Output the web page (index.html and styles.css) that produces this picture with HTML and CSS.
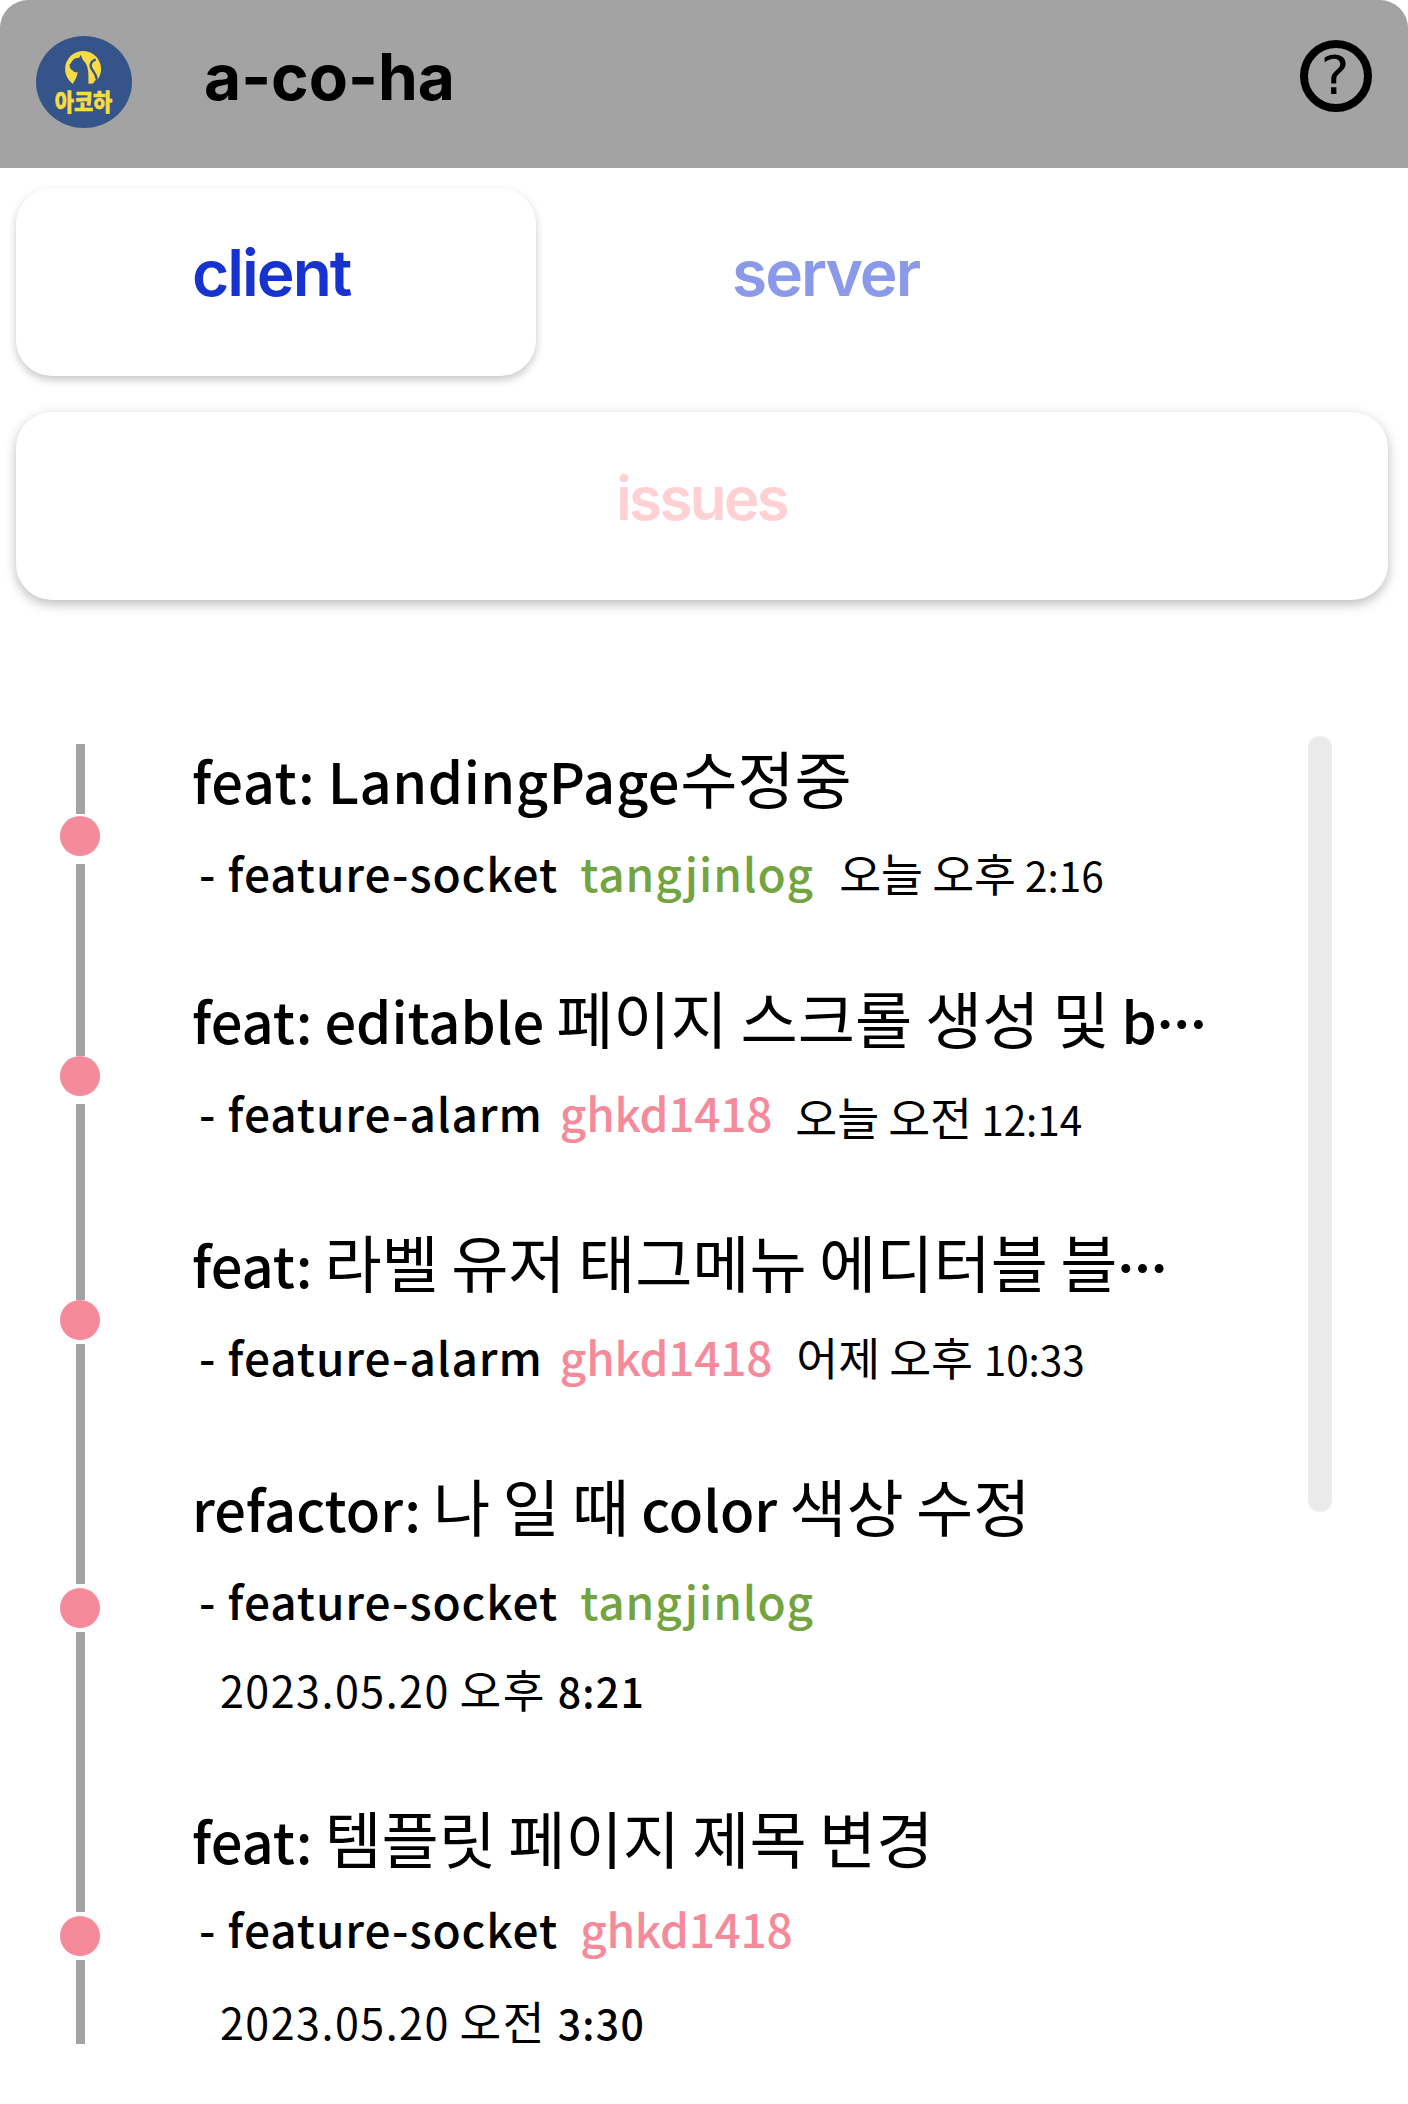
FILE: index.html
```html
<!DOCTYPE html>
<html lang="ko">
<head>
<meta charset="utf-8">
<title>a-co-ha</title>
<link rel="stylesheet" href="styles.css">
</head>
<body>
<header class="header">
  <svg class="logo" viewBox="0 0 96 92" width="96" height="92">
    <ellipse cx="48" cy="46" rx="48" ry="46" fill="#34548a"/>
    <path d="M36.6 47.7A18 18 0 1 1 61.8 43.4L60.4 43L57 47.4L52 47.7Z" fill="#f8dc45"/>
    <path d="M36.6 48.4C39 43.5 41.6 41 41.4 36C39.6 36.4 37.6 36.6 36.9 34.6C34.6 34 33.3 31.5 33.6 28.6C35.4 27 36.4 23.4 39.4 22.2L43.2 21.8L44.7 18.8L47 24C50.4 27 51.8 31 52.2 36C52.6 40 52.4 44 52.4 48.4Z" fill="#34548a"/>
    <path d="M58.8 23.8C55.4 25 53.8 28.4 55 31.6C56.4 34.8 60 37.4 60.6 42.6" fill="none" stroke="#34548a" stroke-width="2.4" stroke-linecap="round"/>
    <text class="logo-text" transform="translate(47.5 75.2) scale(1 1.14)" text-anchor="middle">아코하</text>
  </svg>
  <h1 class="header-title">a-co-ha</h1>
  <button class="help">?</button>
</header>

<nav class="tabs">
  <a class="tab tab-active">client</a>
  <a class="tab">server</a>
</nav>
<a class="issues">issues</a>

<main class="commits">
  <ol class="timeline">
    <li class="commit commit-1">
      <div class="rail"><i class="line-top"></i><i class="dot"></i><i class="line-bottom"></i></div>
      <div class="body">
        <h2 class="title wide">feat: LandingPage<span class="ko">수정중</span></h2>
        <p class="meta"><span class="branch">- feature-socket</span><span class="author green">tangjinlog</span><span class="when"><span class="ko">오늘</span> <span class="ko">오후</span> 2:16</span></p>
      </div>
    </li>
    <li class="commit commit-2">
      <div class="rail"><i class="line-top"></i><i class="dot"></i><i class="line-bottom"></i></div>
      <div class="body">
        <h2 class="title">feat: editable <span class="ko">페이지 스크롤 생성 및</span> b<span class="more">…</span></h2>
        <p class="meta"><span class="branch">- feature-alarm</span><span class="author pink">ghkd1418</span><span class="when lowered"><span class="ko">오늘</span> <span class="ko">오전</span> 12:14</span></p>
      </div>
    </li>
    <li class="commit commit-3">
      <div class="rail"><i class="line-top"></i><i class="dot"></i><i class="line-bottom"></i></div>
      <div class="body">
        <h2 class="title">feat: <span class="ko">라벨 유저 태그메뉴 에디터블 블</span><span class="more">…</span></h2>
        <p class="meta"><span class="branch">- feature-alarm</span><span class="author pink">ghkd1418</span><span class="when"><span class="ko">어제</span> <span class="ko">오후</span> <span class="clock">10:33</span></span></p>
      </div>
    </li>
    <li class="commit commit-4">
      <div class="rail"><i class="line-top"></i><i class="dot"></i><i class="line-bottom"></i></div>
      <div class="body">
        <h2 class="title">refactor: <span class="ko">나 일 때</span> color <span class="ko">색상 수정</span></h2>
        <p class="meta"><span class="branch">- feature-socket</span><span class="author green">tangjinlog</span></p>
        <p class="date"><span class="day">2023.05.20 </span><span class="ko">오후</span><span class="time"> 8:21</span></p>
      </div>
    </li>
    <li class="commit commit-5">
      <div class="rail"><i class="line-top"></i><i class="dot"></i><i class="line-bottom"></i></div>
      <div class="body">
        <h2 class="title">feat: <span class="ko">템플릿 페이지 제목 변경</span></h2>
        <p class="meta"><span class="branch">- feature-socket</span><span class="author pink">ghkd1418</span></p>
        <p class="date"><span class="day">2023.05.20 </span><span class="ko">오전</span><span class="time"> 3:30</span></p>
      </div>
    </li>
  </ol>
  <div class="scrollbar"></div>
</main>
</body>
</html>
```
FILE: styles.css
```css
* { box-sizing: border-box; margin: 0; padding: 0; }

body {
  width: 1408px;
  height: 2104px;
  overflow: hidden;
  background: #fff;
  color: #000;
  font-family: "Noto Sans CJK JP", "Noto Sans CJK KR", sans-serif;
  font-feature-settings: "locl" 0;
}

/* header */
.header {
  display: flex;
  align-items: flex-start;
  height: 168px;
  padding: 36px 36px 0;
  background: #a3a3a3;
  border-radius: 28px 28px 0 0;
}
.logo { flex: none; }
.logo-text {
  font: 900 20.9px "Noto Sans CJK KR", sans-serif;
  fill: #f8dc45;
  stroke: #f8dc45;
  stroke-width: .4px;
}
.header-title {
  flex: 1;
  margin-left: 72px;
  font: 700 64px/82px Inter, sans-serif;
}
.help {
  width: 72px;
  height: 72px;
  margin-top: 4px;
  padding-right: 2px;
  border: 8px solid #000;
  border-radius: 50%;
  background: none;
  color: #000;
  font: 400 54px/52px "DejaVu Sans", sans-serif;
}

/* tabs */
.tabs { display: flex; padding: 20px 16px 0; }
.tab, .issues {
  height: 188px;
  border-radius: 36px;
  font: 600 64px/170px Inter, sans-serif;
  letter-spacing: -2px;
}
.tab { flex: 0 0 520px; padding-left: 196px; color: #8a99e8; }
.tab-active {
  padding-left: 176px;
  color: #1733cf;
  background: #fff;
  box-shadow: 0 4px 8px rgba(0, 0, 0, .22);
}
.issues {
  display: block;
  margin: 36px 20px 0 16px;
  padding-left: 600px;
  color: #ffd1d3;
  font-size: 60px;
  line-height: 172px;
  letter-spacing: -2.6px;
  box-shadow: 0 4px 12px rgba(0, 0, 0, .27);
}

/* commit list */
.commits {
  display: flex;
  justify-content: space-between;
  padding: 136px 76px 0 60px;
}
.timeline { list-style: none; margin-top: 8px; }
.commit { display: flex; height: 240px; }
.commit-2, .commit-3 { height: 244px; }
.commit-4 { height: 332px; }

.rail {
  display: flex;
  flex-direction: column;
  align-items: center;
  width: 40px;
  margin-right: 92px;
}
.line-top, .line-bottom { width: 9px; background: #a3a3a3; }
.line-top { height: 72px; }
.line-bottom { flex: 1; margin-top: 8px; }
.dot { width: 40px; height: 40px; border-radius: 50%; background: #f58a9b; }
.commit-1 .line-top { height: 70px; margin-bottom: 2px; }
.commit-3 .line-bottom, .commit-4 .line-bottom, .commit-5 .line-bottom { margin-top: 4px; }
.commit-4 .line-top { height: 112px; margin-bottom: 4px; }
.commit-5 .line-top { height: 108px; margin-bottom: 4px; }

.body { white-space: nowrap; }
.title { font-size: 56px; line-height: 72px; font-weight: 500; word-spacing: -.6px; }
.wide { letter-spacing: .56px; }
.title .ko {
  font-size: 62.2px;
  font-weight: 400;
  line-height: 0;
  letter-spacing: 0;
  word-spacing: -1.6px;
}
.commit-2 .title .ko { word-spacing: -1.1px; }
.title .more {
  font-size: 50px;
  font-weight: 900;
  line-height: 0;
  vertical-align: 1px;
}

.meta {
  height: 56px;
  margin-top: 28px;
  padding-left: 7px;
  font-size: 46px;
  line-height: 56px;
  font-weight: 500;
}
.meta span, .date span { line-height: 0; }
.branch { letter-spacing: .92px; }
.author { margin-left: 22px; }
.green { color: #73a43f; letter-spacing: .92px; }
.pink { color: #f58a9b; letter-spacing: -.25px; }
.commit-2 .author, .commit-3 .author { margin-left: 17px; }
.when { margin-left: 25px; font-size: 40.5px; font-weight: 400; }
.when .ko { font-size: 45.6px; }
.commit-2 .when { margin-left: 23px; }
.commit-3 .when { margin-left: 24px; }
.clock { margin-left: 1.5px; }
.lowered { vertical-align: -4px; }
.commit-5 .meta { margin-top: 24px; }

.date {
  height: 56px;
  margin-top: 32px;
  padding-left: 28px;
  font-size: 46px;
  line-height: 56px;
  font-weight: 400;
}
.commit-5 .date { margin-top: 36px; }
.day { font-size: 43px; letter-spacing: 1.5px; }
.date .ko { margin-left: -1.4px; font-size: 45.3px; letter-spacing: 1.6px; }
.time { margin-left: 1px; font-size: 41px; font-weight: 500; letter-spacing: 1.3px; }

.scrollbar { width: 24px; height: 776px; border-radius: 12px; background: #eaeaea; }
```
